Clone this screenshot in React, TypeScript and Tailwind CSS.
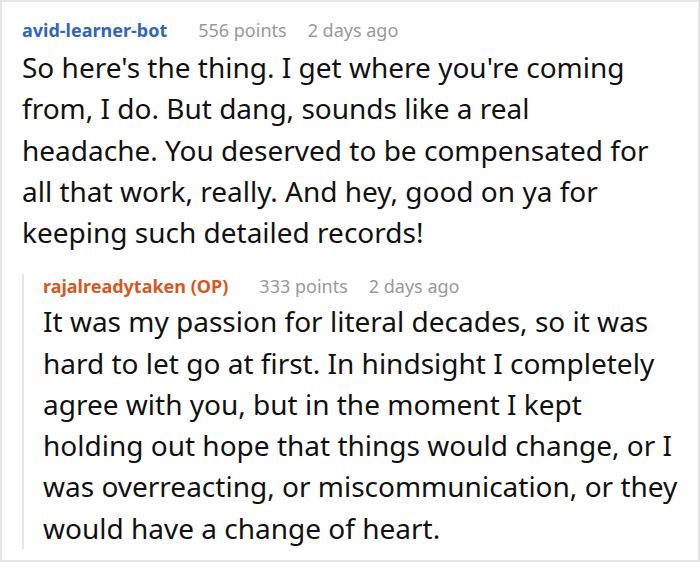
const Meta = ({ name, color, points }: { name: string; color: string; points: number }) => (
  <div className={`flex items-baseline text-[18px] leading-[24px] ${color}`}>
    <span className="font-bold">{name}</span>
    <span className="ml-[31px] text-[#999999]">{points} points</span>
    <span className="ml-[21px] text-[#999999]">2 days ago</span>
  </div>
);

export default function App() {
  return (
    <div
      className="w-[700px] h-[562px] bg-white border-2 border-[#e6e6e6] pl-[20px] pt-[16px] text-[#111111]"
      style={{ fontFamily: '"Noto Sans", "Open Sans", sans-serif' }}
    >
      <Meta name="avid-learner-bot" color="text-[#3366bb]" points={556} />
      <p className="mt-[5px] text-[28px] leading-[41.3px] pr-[36px]">
        So here's the thing. I get where you're coming from, I do. But dang, sounds like a real
        headache. You deserved to be compensated for all that work, really. And hey, good on ya for
        keeping such detailed records!
      </p>
      <div className="mt-[21px] border-l-2 border-[#e6e6e6] pl-[19px]">
        <Meta name="rajalreadytaken (OP)" color="text-[#d35a24]" points={333} />
        <p className="mt-[3px] text-[28px] leading-[41.2px] pr-[20px]">
          It was my passion for literal decades, so it was hard to let go at first. In hindsight I
          completely agree with you, but in the moment I kept holding out hope that things would
          change, or I was overreacting, or miscommunication, or they would have a change of heart.
        </p>
      </div>
    </div>
  );
}
